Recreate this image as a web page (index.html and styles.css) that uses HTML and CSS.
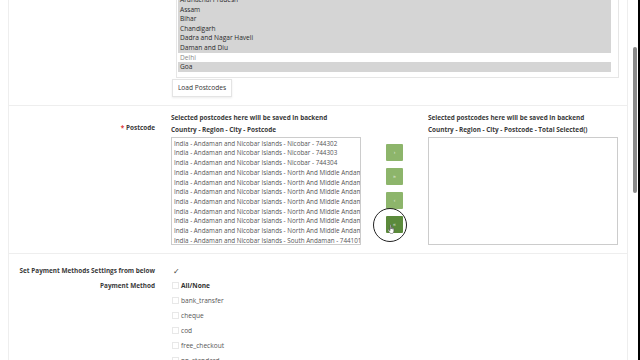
FILE: index.html
```html
<!DOCTYPE html>
<html>
<head>
    <title>Postcode Settings</title>
    <link rel="stylesheet" href="styles.css">
</head>
<body>
<div class="screen">
    <div class="page">
        <div class="row row-regions">
            <div class="label"></div>
            <div class="field">
                <div class="listbox">
                    <div class="opt sel">Arunachal Pradesh</div>
                    <div class="opt sel">Assam</div>
                    <div class="opt sel">Bihar</div>
                    <div class="opt sel">Chandigarh</div>
                    <div class="opt sel">Dadra and Nagar Haveli</div>
                    <div class="opt sel">Daman and Diu</div>
                    <div class="opt dim">Delhi</div>
                    <div class="opt sel">Goa</div>
                </div>
                <button class="btn-load">Load Postcodes</button>
            </div>
        </div>

        <div class="row row-postcode">
            <div class="label label-postcode"><span class="req">*</span> Postcode</div>
            <div class="field picker">
                <div class="pick-col">
                    <div class="hint">Selected postcodes here will be saved in backend</div>
                    <div class="hint">Country - Region - City - Postcode</div>
                    <div class="pbox">
                        <div class="pitem">India - Andaman and Nicobar Islands - Nicobar - 744302</div>
                        <div class="pitem">India - Andaman and Nicobar Islands - Nicobar - 744303</div>
                        <div class="pitem">India - Andaman and Nicobar Islands - Nicobar - 744304</div>
                        <div class="pitem">India - Andaman and Nicobar Islands - North And Middle Andaman - 744201</div>
                        <div class="pitem">India - Andaman and Nicobar Islands - North And Middle Andaman - 744202</div>
                        <div class="pitem">India - Andaman and Nicobar Islands - North And Middle Andaman - 744203</div>
                        <div class="pitem">India - Andaman and Nicobar Islands - North And Middle Andaman - 744204</div>
                        <div class="pitem">India - Andaman and Nicobar Islands - North And Middle Andaman - 744205</div>
                        <div class="pitem">India - Andaman and Nicobar Islands - North And Middle Andaman - 744206</div>
                        <div class="pitem">India - Andaman and Nicobar Islands - North And Middle Andaman - 744207</div>
                        <div class="pitem">India - Andaman and Nicobar Islands - South Andaman - 744101</div>
                    </div>
                </div>
                <div class="move-btns">
                    <button class="mv">&rsaquo;</button>
                    <button class="mv">&raquo;</button>
                    <button class="mv">&lsaquo;</button>
                    <button class="mv active">&laquo;
                        <span class="click-ring"></span>
                        <svg class="hand" width="9" height="10" viewBox="0 0 9 10">
                            <path d="M3 1.2c0-.6.9-.6.9 0V5l.1-1.2c0-.6.9-.6.9 0V5l.1-.9c0-.6.9-.6.9 0V5.3l.1-.5c0-.6.9-.6.9 0V7c0 1.6-1 2.6-2.4 2.6H4.4C3.5 9.6 3 9.1 2.5 8.4L1.1 6.3c-.3-.5.3-1 .7-.6L3 6.8z" fill="#fff" stroke="#555" stroke-width=".6"/>
                        </svg>
                    </button>
                </div>
                <div class="pick-col">
                    <div class="hint">Selected postcodes here will be saved in backend</div>
                    <div class="hint">Country - Region - City - Postcode - Total Selected()</div>
                    <div class="pbox"></div>
                </div>
            </div>
        </div>

        <div class="row row-payment">
            <div class="label">Set Payment Methods Settings from below</div>
            <div class="field check">&#10003;</div>
        </div>
        <div class="row row-methods">
            <div class="label">Payment Method</div>
            <div class="field methods">
                <div class="method all"><span class="cb"></span>All/None</div>
                <div class="method"><span class="cb"></span>bank_transfer</div>
                <div class="method"><span class="cb"></span>cheque</div>
                <div class="method"><span class="cb"></span>cod</div>
                <div class="method"><span class="cb"></span>free_checkout</div>
                <div class="method"><span class="cb"></span>pp_standard</div>
            </div>
        </div>
    </div>
    <div class="scrollbar"><div class="thumb"></div></div>
</div>
</body>
</html>
```

FILE: styles.css
```css
body {
    margin: 0;
    font-family: "Open Sans", "Liberation Sans", sans-serif;
    color: #444;
    background: #fff;
    overflow: hidden;
}
.screen {
    display: flex;
    height: 360px;
    overflow: hidden;
}
.page {
    width: 618px;
    margin-left: 8px;
    margin-top: -15px;
    border-left: 1px solid #eee;
    border-right: 1px solid #eee;
}
.scrollbar {
    width: 10px;
    border-right: 2px solid #000;
    background: #fff;
}
.thumb {
    width: 4px;
    height: 146px;
    margin-top: 47px;
    margin-left: 5px;
    background: #8a8a8a;
    border-radius: 2px;
}
.row {
    display: flex;
}
.label {
    width: 146px;
    flex-shrink: 0;
    text-align: right;
    font-size: 6.4px;
    font-weight: bold;
    color: #3a3a3a;
}
.field {
    margin-left: 17px;
}
.row-regions {
    padding: 8px 0 8px;
    border-bottom: 1px solid #eee;
}
.listbox {
    width: 433px;
    margin-left: 4px;
    border: 1px solid #e6e6e6;
    padding: 1px 7px 5px 1px;
}
.opt {
    height: 9.6px;
    line-height: 9.6px;
    font-size: 6.6px;
    padding-left: 2px;
    color: #2a2a2a;
}
.opt.sel {
    background: #d5d5d5;
}
.opt.dim {
    color: #8a8a8a;
}
.btn-load {
    display: block;
    margin-top: 1px;
    width: 60px;
    height: 18px;
    padding: 0;
    background: #fff;
    border: 1px solid #e4e4e4;
    box-shadow: 0 1px 2px rgba(0, 0, 0, 0.08);
    font-family: "Open Sans", "Liberation Sans", sans-serif;
    font-size: 6.6px;
    color: #333;
}
.row-postcode {
    padding: 6px 0 8px;
    border-bottom: 1px solid #eee;
}
.label-postcode {
    padding-top: 11px;
}
.req {
    color: #d33;
}
.picker {
    display: flex;
    margin-left: 16px;
}
.pick-col {
    width: 190px;
}
.hint {
    font-size: 6.4px;
    font-weight: bold;
    line-height: 12px;
    color: #3a3a3a;
    white-space: nowrap;
}
.pbox {
    height: 105px;
    margin-top: 1px;
    border: 1px solid #ccc;
    padding-top: 1px;
    overflow: hidden;
}
.pitem {
    height: 9.7px;
    line-height: 9.7px;
    font-size: 6.3px;
    padding-left: 2px;
    color: #555;
    white-space: nowrap;
}
.move-btns {
    display: flex;
    flex-direction: column;
    gap: 7px;
    padding-top: 32px;
    margin: 0 25px;
}
.mv {
    position: relative;
    width: 17px;
    height: 17px;
    padding: 0;
    border: none;
    border-radius: 1px;
    background: #8db56b;
    color: rgba(255, 255, 255, 0.75);
    font-size: 5px;
    line-height: 8px;
}
.mv.active {
    background: #5b8a3b;
}
.click-ring {
    position: absolute;
    left: -13px;
    top: -8px;
    width: 32px;
    height: 32px;
    border: 1.5px solid #222;
    border-radius: 50%;
}
.hand {
    position: absolute;
    left: 1px;
    top: 8px;
}
.row-payment {
    padding-top: 9px;
    line-height: 15px;
}
.row-payment .label,
.row-methods .label {
    line-height: 15px;
}
.check {
    font-size: 8px;
    color: #444;
    padding-left: 1px;
}
.methods {
    display: flex;
    flex-direction: column;
}
.method {
    display: flex;
    align-items: center;
    height: 15px;
    font-size: 6.6px;
    color: #555;
}
.method.all {
    font-weight: bold;
    color: #333;
}
.cb {
    width: 7px;
    height: 7px;
    border: 1px solid #e8e8e8;
    margin-right: 2px;
    box-sizing: border-box;
}
```
